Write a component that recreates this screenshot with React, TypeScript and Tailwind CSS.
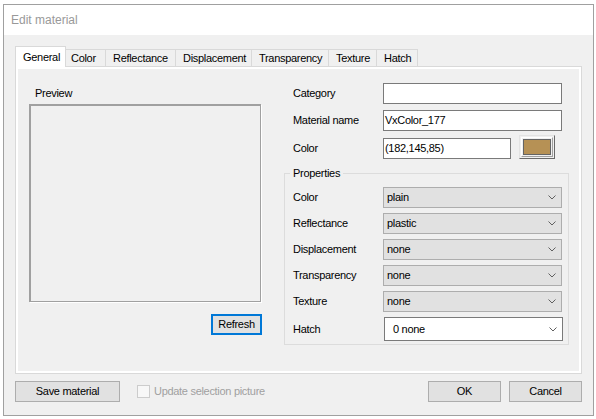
import React from "react";

const tabs = [
  { label: "General", cls: "w-[51px] pl-[7px]", active: true },
  { label: "Color", cls: "w-[40px] pl-[5px]" },
  { label: "Reflectance", cls: "w-[70px] pl-[7px]" },
  { label: "Displacement", cls: "w-[76px] pl-[7px]" },
  { label: "Transparency", cls: "w-[77px] pl-[7px]" },
  { label: "Texture", cls: "w-[48px] pl-[7px]" },
  { label: "Hatch", cls: "w-[41px] pl-[7px]" },
];

const props = [
  { label: "Color", value: "plain" },
  { label: "Reflectance", value: "plastic" },
  { label: "Displacement", value: "none" },
  { label: "Transparency", value: "none" },
  { label: "Texture", value: "none" },
];

function Chevron() {
  return (
    <svg width="8" height="5" viewBox="0 0 8 5" className="shrink-0">
      <path d="M0.5 0.5 L4 4 L7.5 0.5" fill="none" stroke="#606060" strokeWidth="1" />
    </svg>
  );
}

function Field({ label, value, top }: { label: string; value: string; top: string }) {
  return (
    <div className={`flex items-center h-[21px] ${top}`}>
      <div className="w-[99px] pl-[9px]">{label}</div>
      <div className="w-[179px] h-[21px] border border-[#7a7a7a] bg-white pl-[1px] flex items-center">
        {value}
      </div>
    </div>
  );
}

function Button({ label, cls }: { label: string; cls: string }) {
  return (
    <div
      className={`h-[21px] bg-[#e1e1e1] border border-[#adadad] flex items-center justify-center ${cls}`}
    >
      {label}
    </div>
  );
}

export default function App() {
  return (
    <div className="w-[596px] h-[419px] bg-white pt-[4px] pl-[3px] font-['Liberation_Sans',Arial,sans-serif] text-[11px] tracking-[-0.3px] text-black">
      <div className="w-[591px] h-[412px] border border-[#a0a0a0] flex flex-col bg-[#f0f0f0]">
        {/* title bar */}
        <div className="h-[30px] bg-white flex items-center pl-[7px] text-[12px] tracking-normal text-[#999999]">
          Edit material
        </div>

        <div className="flex-1 px-[11px] pt-[11px]">
          {/* tabs */}
          <div className="flex items-end h-[20px]">
            {tabs.map((t) =>
              t.active ? (
                <div
                  key={t.label}
                  className={`relative z-10 h-[21px] mb-[-1px] bg-white border-l border-t border-r border-[#d9d9d9] flex items-center ${t.cls}`}
                >
                  {t.label}
                </div>
              ) : (
                <div
                  key={t.label}
                  className={`h-[17px] border-t border-r border-[#d9d9d9] flex items-center ${t.cls}`}
                >
                  {t.label}
                </div>
              )
            )}
          </div>

          {/* tab page */}
          <div className="w-[567px] h-[308px] border border-[#d9d9d9] bg-white p-[2px]">
            <div className="w-full h-full bg-[#f0f0f0] flex">
              {/* preview */}
              <div className="w-[266px] shrink-0 pl-[11px] pt-[18px]">
                <div className="h-[13px] leading-[13px] pl-[6px] mb-[4px]">Preview</div>
                <div className="w-[232px] h-[198px] border-t-2 border-l-2 border-r border-b border-[#a0a0a0] shadow-[1px_1px_0_#ffffff]" />
                <div className="w-[233px] flex justify-end mt-[12px]">
                  <div className="w-[51px] h-[21px] bg-[#e1e1e1] border-2 border-[#0078d7] flex items-center justify-center">
                    Refresh
                  </div>
                </div>
              </div>

              {/* fields */}
              <div className="w-[287px] shrink-0 pt-[14px]">
                <Field label="Category" value="" top="" />
                <Field label="Material name" value="VxColor_177" top="mt-[6px]" />
                <div className="flex items-start h-[21px] mt-[7px]">
                  <div className="w-[99px] pl-[9px] h-[21px] flex items-center">Color</div>
                  <div className="w-[128px] h-[21px] border border-[#7a7a7a] bg-white pl-[1px] flex items-center">
                    (182,145,85)
                  </div>
                  <div className="ml-[8px] -mt-[3px] w-[36px] h-[24px] border border-t-[#e3e3e3] border-l-[#e3e3e3] border-r-[#696969] border-b-[#696969] bg-[#f0f0f0] p-[1px]">
                    <div className="w-full h-full border border-t-white border-l-white border-r-[#a0a0a0] border-b-[#a0a0a0] p-[1px]">
                      <div className="w-full h-full border border-[#646464] bg-[rgb(182,145,85)]" />
                    </div>
                  </div>
                </div>

                <fieldset className="mt-[8px] w-[285px] border border-[#dcdcdc] pl-[8px] pt-[7px] pb-[3px]">
                  <legend className="ml-[-3px] px-[3px] leading-[13px]">Properties</legend>
                  {props.map((p, i) => (
                    <div
                      key={p.label}
                      className={`flex items-center h-[21px] ${i > 0 ? "mt-[5px]" : ""}`}
                    >
                      <div className="w-[90px]">{p.label}</div>
                      <div className="w-[179px] h-[21px] bg-[#e1e1e1] border border-[#adadad] pl-[3px] pr-[5px] flex items-center justify-between">
                        <span>{p.value}</span>
                        <Chevron />
                      </div>
                    </div>
                  ))}
                  <div className="flex items-center h-[24px] mt-[5px]">
                    <div className="w-[90px]">Hatch</div>
                    <div className="ml-[1px] w-[179px] h-[24px] bg-white border border-[#7a7a7a] pl-[8px] pr-[5px] flex items-center justify-between">
                      <span>0 none</span>
                      <Chevron />
                    </div>
                  </div>
                </fieldset>
              </div>
            </div>
          </div>

          {/* bottom buttons */}
          <div className="w-[567px] flex items-center h-[21px] mt-[7px]">
            <Button label="Save material" cls="w-[105px]" />
            <div className="ml-[17px] w-[13px] h-[13px] border border-[#cccccc] bg-[#f7f7f7]" />
            <div className="ml-[4px] text-[#a0a0a0]">Update selection picture</div>
            <Button label="OK" cls="ml-auto w-[73px]" />
            <Button label="Cancel" cls="ml-[8px] w-[73px]" />
          </div>
        </div>
      </div>
    </div>
  );
}
